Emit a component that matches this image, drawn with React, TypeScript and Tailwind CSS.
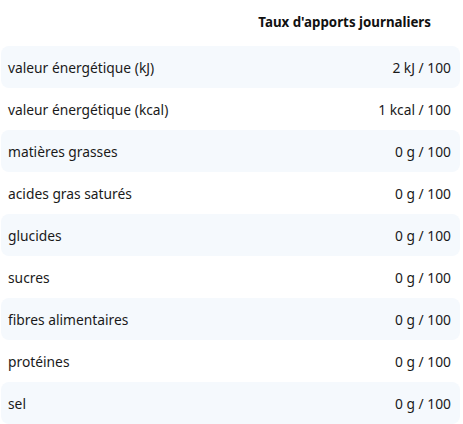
const rows: [string, string][] = [
  ['valeur énergétique (kJ)', '2 kJ / 100'],
  ['valeur énergétique (kcal)', '1 kcal / 100'],
  ['matières grasses', '0 g / 100'],
  ['acides gras saturés', '0 g / 100'],
  ['glucides', '0 g / 100'],
  ['sucres', '0 g / 100'],
  ['fibres alimentaires', '0 g / 100'],
  ['protéines', '0 g / 100'],
  ['sel', '0 g / 100'],
];

export default function App() {
  return (
    <div className="w-[463px] h-[424px] bg-white px-[1px] text-[#1a1a1a] font-['Noto_Sans',sans-serif] text-[13.8px]">
      <div className="h-[46px] flex items-center justify-end pr-[31px]">
        <span className="font-bold text-[13.3px] text-[#111]">Taux d'apports journaliers</span>
      </div>
      <div className="w-[459px]">
        {rows.map(([label, value], i) => (
          <div
            key={label}
            className={
              'h-[42px] flex items-center justify-between pl-[7px] pr-[9px] pt-[2px] rounded-lg ' +
              (i % 2 === 0 ? 'bg-[#f5f9fd]' : '')
            }
          >
            <span>{label}</span>
            <span>{value}</span>
          </div>
        ))}
      </div>
    </div>
  );
}
